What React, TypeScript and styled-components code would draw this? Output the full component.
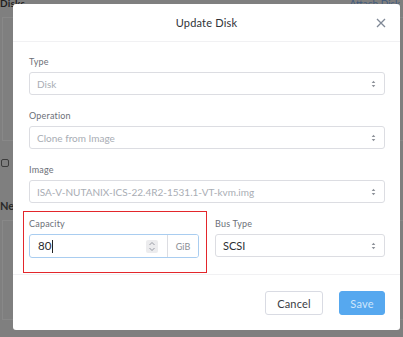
import React from "react";
import styled, { createGlobalStyle } from "styled-components";

const Global = createGlobalStyle`
  html, body { margin: 0; padding: 0; }
  body {
    width: 403px;
    height: 337px;
    overflow: hidden;
    font-family: Lato, "Open Sans", "Liberation Sans", sans-serif;
    background: #7f7f7f;
  }
  * { box-sizing: border-box; }
`;

const Page = styled.div`
  position: relative;
  width: 403px;
  height: 337px;
  background: #7f7f7f;
  overflow: hidden;
`;

const PageHeader = styled.div`
  display: flex;
  justify-content: space-between;
  align-items: center;
  margin-top: -4px;
  height: 13px;
  padding: 0 3px 0 0;
  font-size: 10px;
`;

const PageTitle = styled.span`
  color: #1f1f1f;
  font-weight: 700;
  letter-spacing: 0.2px;
`;

const PageLink = styled.span`
  color: #3f5a7c;
`;

const PageBody = styled.div`
  display: flex;
  flex-direction: column;
  padding: 8px 0 0 0;
`;

const Panel = styled.div<{ $h: number }>`
  height: ${(p) => p.$h}px;
  margin-left: 2px;
  border: 1px solid #888888;
  border-right: none;
`;

const FakeCheck = styled.div`
  width: 8px;
  height: 8px;
  margin: 18px 0 0 1px;
  border: 1px solid #3c3c3c;
  border-radius: 2px;
`;

const SectionTitle = styled.div`
  margin: 32px 0 8px 0;
  font-size: 11px;
  font-weight: 700;
  color: #2a2a2a;
`;

const Modal = styled.div`
  position: absolute;
  left: 13px;
  top: 4px;
  width: 387px;
  height: 326px;
  background: #ffffff;
  border-radius: 3px;
  display: flex;
  flex-direction: column;
`;

const Header = styled.div`
  position: relative;
  height: 38px;
  display: flex;
  align-items: center;
  justify-content: center;
  border-bottom: 1px solid #f1f1f3;
`;

const Title = styled.div`
  font-size: 11px;
  color: #2f3238;
  letter-spacing: 0.2px;
`;

const Close = styled.button`
  position: absolute;
  right: 14px;
  top: 14px;
  width: 10px;
  height: 10px;
  padding: 0;
  border: none;
  background: none;
  display: flex;
`;

const Body = styled.div`
  padding: 14px 15px 16px 16px;
  display: flex;
  flex-direction: column;
  gap: 15px;
`;

const Field = styled.div`
  position: relative;
  display: flex;
  flex-direction: column;
`;

const Label = styled.div`
  font-size: 9px;
  line-height: 12px;
  height: 12px;
  margin-bottom: 4px;
  color: #6c7078;
  letter-spacing: 0.2px;
`;

const Select = styled.div<{ $muted?: boolean }>`
  height: 23px;
  border: 1px solid #dcdde2;
  border-radius: 3px;
  display: flex;
  align-items: center;
  justify-content: space-between;
  padding: 0 8px 0 7px;
  font-size: ${(p) => (p.$muted ? "10px" : "11px")};
  color: ${(p) => (p.$muted ? "#a9adb4" : "#2c2f34")};
  white-space: nowrap;
`;

const Row = styled.div`
  display: grid;
  grid-template-columns: 1fr 1fr;
  column-gap: 16px;
`;

const Highlight = styled.div`
  position: absolute;
  left: -6px;
  top: -7px;
  right: -8px;
  bottom: -15px;
  border: 1px solid #e3262b;
  pointer-events: none;
`;

const InputGroup = styled.div`
  height: 24px;
  display: flex;
  border: 1px solid #a9cdf0;
  border-radius: 3px;
  overflow: hidden;
`;

const InputArea = styled.div`
  flex: 1;
  display: flex;
  align-items: center;
  justify-content: space-between;
  padding: 0 9px 0 8px;
  font-size: 11.5px;
  color: #2a2c30;
`;

const Caret = styled.span`
  display: inline-block;
  width: 1px;
  height: 13px;
  background: #222;
  margin-left: 1px;
  vertical-align: middle;
`;

const Spinner = styled.div`
  width: 12px;
  height: 13px;
  background: #ececee;
  border-radius: 2px;
  display: flex;
  align-items: center;
  justify-content: center;
`;

const Addon = styled.div`
  width: 31px;
  border-left: 1px solid #dcdde2;
  display: flex;
  align-items: center;
  justify-content: center;
  font-size: 9px;
  color: #8b8e95;
  background: #fff;
`;

const Footer = styled.div`
  margin-top: auto;
  border-top: 1px solid #f1f1f3;
  padding: 16px 15px 15px 16px;
  display: flex;
  justify-content: flex-end;
  gap: 16px;
`;

const Button = styled.button<{ $primary?: boolean }>`
  height: 24px;
  width: ${(p) => (p.$primary ? "46px" : "58px")};
  border-radius: 3px;
  font-family: inherit;
  font-size: 11px;
  letter-spacing: 0.2px;
  padding: 0;
  border: 1px solid ${(p) => (p.$primary ? "#56a8ef" : "#d9dbe3")};
  background: ${(p) => (p.$primary ? "#56a8ef" : "#ffffff")};
  color: ${(p) => (p.$primary ? "#cfe6fb" : "#3a3d44")};
`;

const Arrows = () => (
  <svg width="5" height="8" viewBox="0 0 5 8">
    <path d="M2.5 0.8 L4.3 3 L0.7 3 Z" fill="#8c9098" />
    <path d="M2.5 7.2 L4.3 5 L0.7 5 Z" fill="#8c9098" />
  </svg>
);

const Chevrons = () => (
  <svg width="8" height="11" viewBox="0 0 8 11">
    <path d="M1.5 4 L4 1.5 L6.5 4" fill="none" stroke="#8c9098" strokeWidth="0.9" />
    <path d="M1.5 7 L4 9.5 L6.5 7" fill="none" stroke="#8c9098" strokeWidth="0.9" />
  </svg>
);

const SelectField = ({ label, value, muted }: { label: string; value: string; muted?: boolean }) => (
  <Field>
    <Label>{label}</Label>
    <Select $muted={muted}>
      <span>{value}</span>
      <Arrows />
    </Select>
  </Field>
);

export default function App() {
  return (
    <>
      <Global />
      <Page>
        <PageHeader>
          <PageTitle>Disks</PageTitle>
          <PageLink>Attach Disk</PageLink>
        </PageHeader>
        <PageBody>
          <Panel $h={124} />
          <FakeCheck />
          <SectionTitle>Network</SectionTitle>
          <Panel $h={100} />
        </PageBody>
        <Modal>
          <Header>
            <Title>Update Disk</Title>
            <Close aria-label="close">
              <svg width="10" height="10" viewBox="0 0 10 10">
                <path d="M1 1 L9 9 M9 1 L1 9" stroke="#7f8896" strokeWidth="1.3" />
              </svg>
            </Close>
          </Header>
          <Body>
            <SelectField label="Type" value="Disk" muted />
            <SelectField label="Operation" value="Clone from Image" muted />
            <SelectField label="Image" value="ISA-V-NUTANIX-ICS-22.4R2-1531.1-VT-kvm.img" muted />
            <Row>
              <Field>
                <Highlight />
                <Label>Capacity</Label>
                <InputGroup>
                  <InputArea>
                    <span>
                      80
                      <Caret />
                    </span>
                    <Spinner>
                      <Chevrons />
                    </Spinner>
                  </InputArea>
                  <Addon>GiB</Addon>
                </InputGroup>
              </Field>
              <SelectField label="Bus Type" value="SCSI" />
            </Row>
          </Body>
          <Footer>
            <Button>Cancel</Button>
            <Button $primary>Save</Button>
          </Footer>
        </Modal>
      </Page>
    </>
  );
}
